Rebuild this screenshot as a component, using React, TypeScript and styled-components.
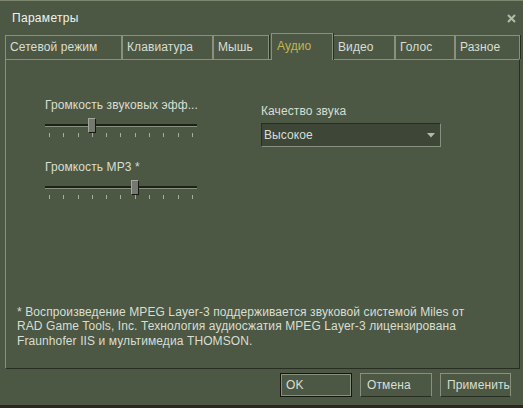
import React from "react";
import styled, { createGlobalStyle } from "styled-components";

const C = {
  bg: "#4c5844",
  light: "#889180",
  dark: "#282e22",
  text: "#d8ded3",
  active: "#c4b550",
  field: "#3e4637",
};

const Global = createGlobalStyle`
  html, body { margin: 0; padding: 0; background: #2b2620; }
  body {
    font-family: "Liberation Sans", Arial, sans-serif;
    font-size: 12px;
    letter-spacing: 0.1px;
    color: ${C.text};
  }
  * { box-sizing: border-box; }
`;

const Window = styled.div`
  width: 523px;
  height: 405px;
  background: ${C.bg};
  border-top: 1px solid #7d866f;
  display: flex;
  flex-direction: column;
`;

const TitleBar = styled.div`
  height: 32px;
  padding: 2px 7px 0 12px;
  display: flex;
  align-items: center;
  justify-content: space-between;
`;

const Title = styled.div`
  color: #f0f2ec;
  font-size: 12px;
  letter-spacing: 0.3px;
  line-height: 15px;
`;

const Close = styled.svg`
  width: 9px;
  height: 9px;
`;

const TabRow = styled.div`
  height: 26px;
  padding-left: 5px;
  display: flex;
  align-items: flex-end;
`;

const Tab = styled.div<{ $w: number; $active?: boolean }>`
  width: ${(p) => p.$w}px;
  height: ${(p) => (p.$active ? 27 : 24)}px;
  margin-bottom: ${(p) => (p.$active ? -1 : 0)}px;
  margin-left: ${(p) => (p.$active ? 2 : 0)}px;
  position: relative;
  z-index: ${(p) => (p.$active ? 1 : 0)};
  background: ${C.bg};
  border-top: 1px solid ${C.light};
  border-left: 1px solid ${C.light};
  border-right: 1px solid ${C.light};
  box-shadow: 1px 0 0 ${C.dark};
  padding: ${(p) => (p.$active ? "0 0 2px 5px" : "0 0 0 4px")};
  display: flex;
  align-items: center;
  color: ${(p) => (p.$active ? C.active : C.text)};
  white-space: nowrap;
  line-height: 15px;
`;

const Panel = styled.div`
  margin: 0 3px 0 5px;
  height: 310px;
  border-top: 1px solid ${C.light};
  border-left: 1px solid ${C.light};
  border-right: 1px solid ${C.dark};
  border-bottom: 1px solid ${C.dark};
  display: flex;
  flex-direction: column;
  padding: 38px 0 20px 0;
`;

const Controls = styled.div`
  display: grid;
  grid-template-columns: 216px 180px;
  padding-left: 39px;
`;

const Column = styled.div<{ $top?: number }>`
  display: flex;
  flex-direction: column;
  padding-top: ${(p) => p.$top ?? 0}px;
`;

const Label = styled.div`
  line-height: 15px;
  white-space: nowrap;
`;

const Slider = styled.div<{ $gap: number }>`
  position: relative;
  width: 152px;
  height: 19px;
  margin-top: 5px;
  margin-bottom: ${(p) => p.$gap}px;
  padding-top: 6px;
`;

const Track = styled.div`
  height: 3px;
  background: #1d2219;
  border-bottom: 1px solid ${C.light};
`;

const Ticks = styled.div`
  margin-top: 6px;
  padding: 0 4px;
  display: flex;
  justify-content: space-between;
`;

const Tick = styled.div`
  width: 1px;
  height: 4px;
  background: #a7ad9d;
`;

const Thumb = styled.div`
  position: absolute;
  top: 0;
  width: 8px;
  height: 15px;
  background: #74786f;
  border-top: 1px solid #a3a79c;
  border-left: 1px solid #a3a79c;
  border-right: 1px solid #161914;
  border-bottom: 1px solid #161914;
`;

const Combo = styled.div`
  margin-top: 4px;
  width: 180px;
  height: 24px;
  background: ${C.field};
  border-top: 1px solid ${C.dark};
  border-left: 1px solid ${C.dark};
  border-right: 1px solid ${C.light};
  border-bottom: 1px solid ${C.light};
  padding: 0 5px 0 2px;
  display: flex;
  align-items: center;
  justify-content: space-between;
  line-height: 15px;
`;

const Arrow = styled.svg`
  width: 8px;
  height: 5px;
`;

const Note = styled.div`
  margin-top: auto;
  padding-left: 11px;
  line-height: 14.3px;
  white-space: nowrap;
`;

const ButtonRow = styled.div`
  margin-top: 4px;
  padding-right: 12px;
  display: flex;
  justify-content: flex-end;
  gap: 8px;
`;

const Button = styled.div<{ $default?: boolean; $w: number }>`
  width: ${(p) => p.$w}px;
  height: 24px;
  padding-left: ${(p) => (p.$default ? 5 : 6)}px;
  display: flex;
  align-items: center;
  line-height: 15px;
  white-space: nowrap;
  border: 1px solid ${(p) => (p.$default ? "#141711" : C.light)};
  border-bottom-color: ${(p) => (p.$default ? "#141711" : C.dark)};
  box-shadow: ${(p) => (p.$default ? `inset 1px 1px 0 ${C.light}, inset -1px -1px 0 ${C.light}` : "none")};
`;

const tabs: { label: string; w: number; active?: boolean }[] = [
  { label: "Сетевой режим", w: 117 },
  { label: "Клавиатура", w: 91 },
  { label: "Мышь", w: 56 },
  { label: "Аудио", w: 62, active: true },
  { label: "Видео", w: 62 },
  { label: "Голос", w: 60 },
  { label: "Разное", w: 65 },
];

function VolumeSlider({ value, gap }: { value: number; gap: number }) {
  return (
    <Slider $gap={gap}>
      <Track />
      <Ticks>
        {Array.from({ length: 11 }, (_, i) => (
          <Tick key={i} />
        ))}
      </Ticks>
      <Thumb style={{ left: value * 14.4 }} />
    </Slider>
  );
}

export default function App() {
  return (
    <>
      <Global />
      <Window>
        <TitleBar>
          <Title>Параметры</Title>
          <Close viewBox="0 0 9 9">
            <path d="M1 1 L8 8 M8 1 L1 8" stroke="#b4baab" strokeWidth="2" />
          </Close>
        </TitleBar>
        <TabRow>
          {tabs.map((t) => (
            <Tab key={t.label} $w={t.w} $active={t.active}>
              {t.label}
            </Tab>
          ))}
        </TabRow>
        <Panel>
          <Controls>
            <Column>
              <Label>Громкость звуковых эфф...</Label>
              <VolumeSlider value={3} gap={23} />
              <Label>Громкость MP3 *</Label>
              <VolumeSlider value={6} gap={0} />
            </Column>
            <Column $top={6}>
              <Label>Качество звука</Label>
              <Combo>
                <span>Высокое</span>
                <Arrow viewBox="0 0 8 5">
                  <path d="M0 0 L8 0 L4 4.5 Z" fill="#b4baab" />
                </Arrow>
              </Combo>
            </Column>
          </Controls>
          <Note>
            * Воспроизведение MPEG Layer-3 поддерживается звуковой системой Miles от
            <br />
            RAD Game Tools, Inc. Технология аудиосжатия MPEG Layer-3 лицензирована
            <br />
            Fraunhofer IIS и мультимедиа THOMSON.
          </Note>
        </Panel>
        <ButtonRow>
          <Button $default $w={72}>OK</Button>
          <Button $w={72}>Отмена</Button>
          <Button $w={71}>Применить</Button>
        </ButtonRow>
      </Window>
    </>
  );
}
